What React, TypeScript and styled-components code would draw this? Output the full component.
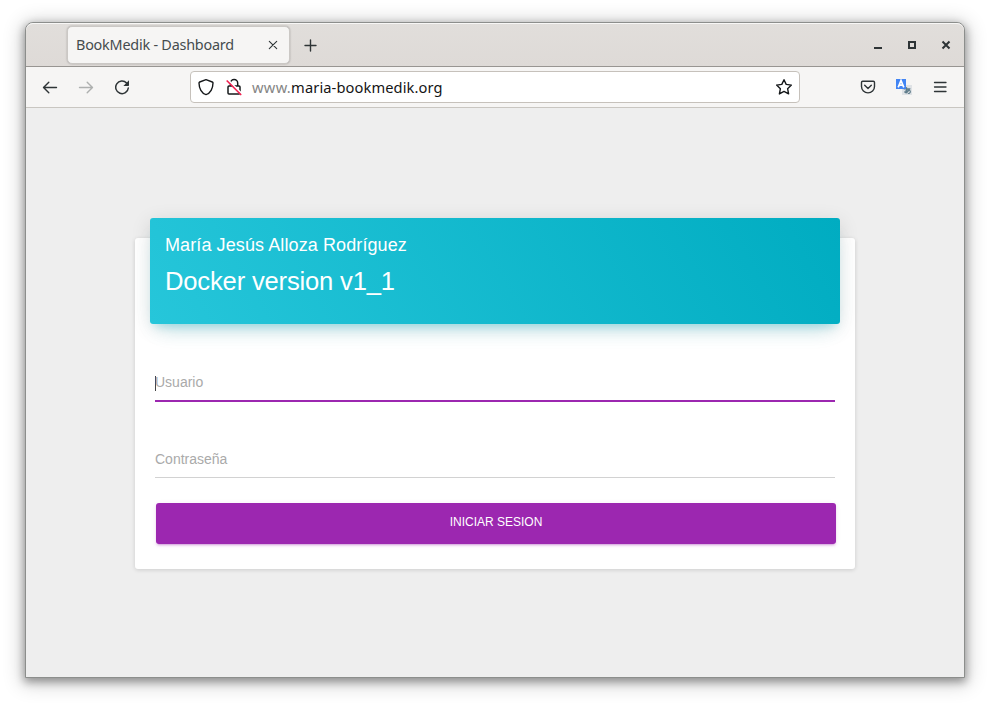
import React from "react";
import styled, { createGlobalStyle } from "styled-components";

const GlobalStyle = createGlobalStyle`
  * { box-sizing: border-box; }
  body { margin: 0; background: #fff; overflow: hidden; }
`;

const Desktop = styled.main`
  width: 990px;
  height: 706px;
  padding: 22px 25px 28px;
  overflow: hidden;
`;

const Window = styled.div`
  width: 940px;
  height: 656px;
  display: flex;
  flex-direction: column;
  overflow: hidden;
  border: 1px solid #8c8e8c;
  border-radius: 8px 8px 0 0;
  background: #eee;
  box-shadow: 0 3px 9px 1px rgba(0, 0, 0, 0.34), 0 3px 20px 3px rgba(0, 0, 0, 0.2);
`;

const TitleBar = styled.header`
  height: 44px;
  flex: none;
  display: flex;
  align-items: flex-start;
  padding: 3px 6px 0 41px;
  color: #2e3436;
  background: linear-gradient(#e1dedb, #dedad7);
  border-bottom: 1px solid #989592;
  box-shadow: inset 0 1px #f8f7f6;
  border-radius: 7px 7px 0 0;
`;

const Tab = styled.div`
  width: 223px;
  height: 38px;
  display: flex;
  align-items: center;
  justify-content: space-between;
  padding: 0 11px 0 8px;
  border: 1px solid #cbc8c5;
  border-radius: 5px;
  background: #f6f5f4;
  box-shadow: 0 0 2px rgba(0, 0, 0, 0.28);
`;

const TabTitle = styled.span`
  font: 14.4px/20px "Noto Sans", sans-serif;
  letter-spacing: -0.22px;
  white-space: nowrap;
  color: #454c4e;
`;

const IconButton = styled.button<{ $width: number; $height?: number; $dim?: boolean }>`
  width: ${(p) => p.$width}px;
  height: ${(p) => p.$height ?? 40}px;
  flex: none;
  display: flex;
  align-items: center;
  justify-content: center;
  padding: 0;
  border: 0;
  background: none;
  color: ${(p) => (p.$dim ? "#aeb0af" : "#2e3436")};
`;

const Glyph = styled.svg`
  display: block;
  flex: none;
  fill: none;
  stroke: currentColor;
  stroke-width: 1.4;
  stroke-linecap: round;
  stroke-linejoin: round;
`;

const WindowControls = styled.div`
  display: flex;
  margin-left: auto;
  gap: 10px;
`;

const Toolbar = styled.nav`
  height: 41px;
  flex: none;
  display: flex;
  align-items: center;
  padding: 0 6px;
  background: #f6f5f4;
  border-bottom: 1px solid #c9c6c1;
`;

const AddressBar = styled.div`
  width: 610px;
  height: 32px;
  display: flex;
  align-items: center;
  gap: 10px;
  margin-left: 50px;
  padding: 0 6px;
  border: 1px solid #c6c1bb;
  border-radius: 4px;
  background: #fff;
  color: #15181a;
`;

const Address = styled.span`
  flex: 1;
  margin-left: -1px;
  font: 14.67px/20px "Noto Sans", sans-serif;
  letter-spacing: 0.1px;
  white-space: nowrap;
  color: #151515;
`;

const Subdomain = styled.span`
  letter-spacing: 0.3px;
  color: #858585;
`;

const Actions = styled.div`
  display: flex;
  margin-left: 50px;
`;

const Page = styled.section`
  flex: 1;
  padding: 110px 109px 0;
  background: #eee;
  font-family: "Liberation Sans", Arial, sans-serif;
`;

const Card = styled.div`
  height: 331px;
  margin-top: 20px;
  padding: 0 15px;
  border-radius: 3px;
  background: #fff;
  box-shadow: 0 1px 4px rgba(0, 0, 0, 0.14);
`;

const CardHeader = styled.div`
  height: 106px;
  transform: translateY(-20px);
  margin-bottom: -20px;
  padding: 15px;
  border-radius: 3px;
  color: #fff;
  background: linear-gradient(60deg, #26c6da, #00acc1);
  box-shadow: 0 12px 20px -10px rgba(0, 188, 212, 0.28),
    0 4px 20px rgba(0, 0, 0, 0.12), 0 7px 8px -5px rgba(0, 188, 212, 0.2);
`;

const Author = styled.h4`
  margin: 0;
  font-size: 18px;
  font-weight: 400;
  line-height: 24px;
  letter-spacing: 0.1px;
`;

const Version = styled.h3`
  margin: 7px 0 0;
  font-size: 25.6px;
  font-weight: 400;
  line-height: 34px;
  letter-spacing: -0.18px;
`;

const Form = styled.form`
  padding: 40px 5px 0;
`;

const Field = styled.div<{ $focused?: boolean }>`
  height: ${(p) => (p.$focused ? 38 : 36)}px;
  margin-bottom: ${(p) => (p.$focused ? 40 : 25)}px;
  display: flex;
  align-items: center;
  padding-bottom: ${(p) => (p.$focused ? 1 : 2)}px;
  border-bottom: ${(p) => (p.$focused ? "2px solid #9c27b0" : "1px solid #d2d2d2")};
  color: #aaa;
  font-size: 14px;
  line-height: 20px;
`;

const Caret = styled.i`
  width: 1px;
  height: 15px;
  margin: 3px -1px 0 0;
  background: #444;
`;

const Submit = styled.button`
  display: block;
  width: 680px;
  height: 41px;
  margin-left: 1px;
  padding: 0 0 3px;
  border: 0;
  border-radius: 3px;
  background: #9c27b0;
  color: #fff;
  font: 12px/17px "Liberation Sans", Arial, sans-serif;
  box-shadow: 0 2px 2px rgba(156, 39, 176, 0.14),
    0 3px 1px -2px rgba(156, 39, 176, 0.2), 0 1px 5px rgba(156, 39, 176, 0.12);
`;

const TranslateIcon = () => (
  <Glyph width="16" height="16" viewBox="0 0 16 16">
    <rect x="6" y="6" width="10" height="10" fill="#dfe2e5" stroke="none" />
    <path d="M8 9.800h6M10.600 8.500v5.300M13.300 10c-1 3-3.300 4.200-4.300 3.500-.7-.9 2-3.300 4.500-2.200 1.700 1 .7 3-1.200 3.200" stroke="#607d8b" strokeWidth="1.2" />
    <path d="M0 0h10v10H0z" fill="#4285f4" stroke="none" />
    <path d="M2.200 8.400 5 1.500l2.800 6.900M3.300 6.200h3.400" stroke="#fff" strokeWidth="1.7" strokeLinecap="butt" strokeLinejoin="miter" />
  </Glyph>
);

export default function App() {
  return (
    <>
      <GlobalStyle />
      <Desktop>
        <Window>
          <TitleBar>
            <Tab>
              <TabTitle>BookMedik - Dashboard</TabTitle>
              <Glyph width="10" height="10" viewBox="0 0 10 10">
                <path d="m1.3 1.3 7.400 7.400m0-7.400L1.3 8.700" strokeWidth="1.1" />
              </Glyph>
            </Tab>
            <IconButton $width={41} $height={39} aria-label="New tab">
              <Glyph width="13" height="13" viewBox="0 0 13 13">
                <path d="M6.5 1v11M1 6.5h11" strokeWidth="1.4" />
              </Glyph>
            </IconButton>
            <WindowControls>
              <IconButton $width={24} $height={38} aria-label="Minimize">
                <Glyph width="16" height="16" viewBox="0 0 16 16">
                  <path d="M4 10h8v2H4z" fill="currentColor" stroke="none" />
                </Glyph>
              </IconButton>
              <IconButton $width={24} $height={38} aria-label="Maximize">
                <Glyph width="16" height="16" viewBox="0 0 16 16">
                  <path d="M5 5h6v6H5z" strokeWidth="2" strokeLinejoin="miter" />
                </Glyph>
              </IconButton>
              <IconButton $width={24} $height={38} aria-label="Close">
                <Glyph width="16" height="16" viewBox="0 0 16 16">
                  <path d="m4.5 4.5 7 7m0-7-7 7" strokeWidth="2" strokeLinecap="butt" />
                </Glyph>
              </IconButton>
            </WindowControls>
          </TitleBar>
          <Toolbar>
            <IconButton $width={36} aria-label="Back">
              <Glyph width="16" height="16" viewBox="0 0 16 16">
                <path d="M14.5 8.500H1.500m5.300-5.300-5.300 5.300 5.300 5.300" />
              </Glyph>
            </IconButton>
            <IconButton $width={36} $dim aria-label="Forward">
              <Glyph width="16" height="16" viewBox="0 0 16 16">
                <path d="M1.5 8.500h13M9.200 3.200l5.300 5.300-5.300 5.300" />
              </Glyph>
            </IconButton>
            <IconButton $width={36} aria-label="Reload">
              <Glyph width="16" height="16" viewBox="0 0 16 16">
                <path d="M12.6 4A6.3 6.3 0 1 0 14.3 9" strokeWidth="1.5" />
                <path d="M15 1.3v4.900c0 .4-.3.7-.7.7H9.400z" fill="currentColor" stroke="none" />
              </Glyph>
            </IconButton>
            <AddressBar>
              <Glyph width="18" height="18" viewBox="0 0 18 18">
                <path d="M9 1.6 15.3 4c.5.2.8.6.7 1.1-.1 5.3-2.5 10.5-7 11.5-4.5-1-6.900-6.200-7-11.500 0-.5.2-.9.700-1.100z" />
              </Glyph>
              <Glyph width="18" height="18" viewBox="0 0 18 18">
                <path d="M5.5 8V5.200a3.600 3.600 0 0 1 7.200 0V8M4 8h10c.6 0 1 .4 1 1v6c0 .6-.4 1-1 1H4c-.6 0-1-.4-1-1V9c0-.6.4-1 1-1z" strokeWidth="1.5" />
                <path d="m3.200 2.200 13 13" stroke="#fff" strokeWidth="1.800" />
                <path d="m2.200 3 13.500 13.500" stroke="#f22352" strokeWidth="1.700" />
              </Glyph>
              <Address>
                <Subdomain>www.</Subdomain>maria-bookmedik.org
              </Address>
              <Glyph width="18" height="18" viewBox="0 0 18 18">
                <path d="m9 1.700 2.200 4.700 5.200.7-3.800 3.600 1 5.200L9 13.400l-4.600 2.500 1-5.200-3.800-3.600 5.200-.7z" />
              </Glyph>
            </AddressBar>
            <Actions>
              <IconButton $width={36} aria-label="Pocket">
                <Glyph width="16" height="16" viewBox="0 0 16 16">
                  <path d="M2.700 2.200h10.600c.7 0 1.200.5 1.200 1.200v4a6.500 6.500 0 0 1-13 0v-4c0-.7.5-1.200 1.200-1.200zM4.700 6.300 8 9.500l3.300-3.200" />
                </Glyph>
              </IconButton>
              <IconButton $width={36} aria-label="Translate">
                <TranslateIcon />
              </IconButton>
              <IconButton $width={36} aria-label="Menu">
                <Glyph width="14" height="12" viewBox="0 0 14 12">
                  <path d="M1.500 1.500h11.500M1.500 6h11.500M1.500 10.500h11.500" strokeWidth="1.300" />
                </Glyph>
              </IconButton>
            </Actions>
          </Toolbar>
          <Page>
            <Card>
              <CardHeader>
                <Author>María Jesús Alloza Rodríguez</Author>
                <Version>Docker version v1_1</Version>
              </CardHeader>
              <Form>
                <Field $focused>
                  <Caret />
                  <span>Usuario</span>
                </Field>
                <Field>
                  <span>Contraseña</span>
                </Field>
                <Submit type="button">INICIAR SESION</Submit>
              </Form>
            </Card>
          </Page>
        </Window>
      </Desktop>
    </>
  );
}
